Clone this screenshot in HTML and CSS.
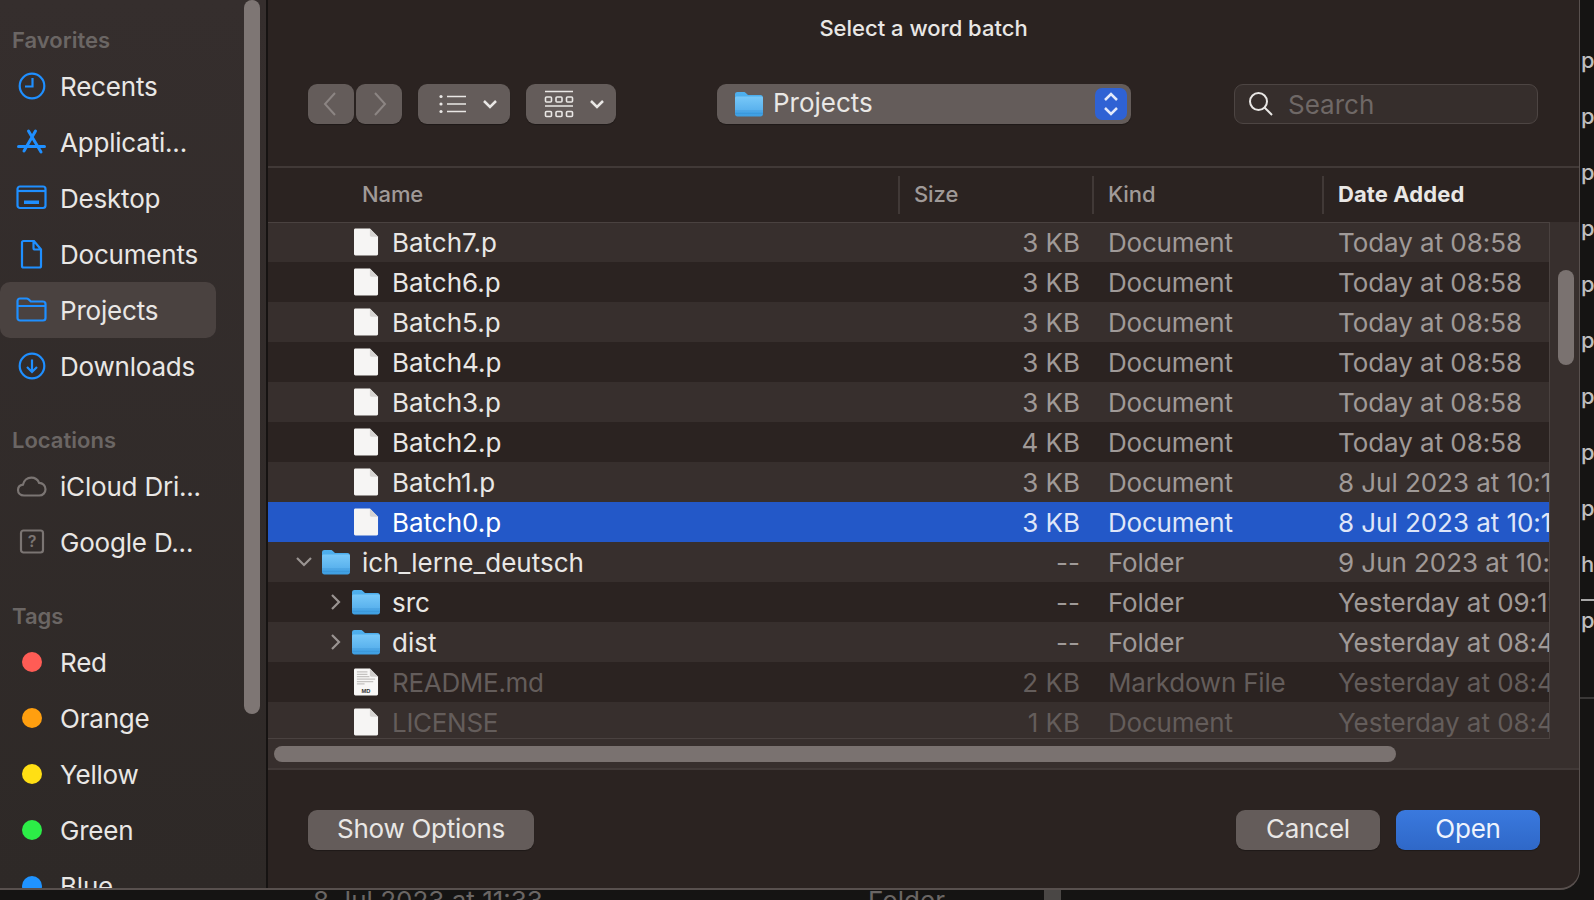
FILE: index.html
```html
<!DOCTYPE html>
<html lang="en">
<head>
    <meta charset="UTF-8">
    <meta name="viewport" content="width=device-width, initial-scale=1.0">
    <title>Select a word batch</title>
    <link rel="stylesheet" href="styles.css">
</head>
<body>

    <!-- shared icons -->
    <svg class="defs" width="0" height="0">
        <defs>
            <linearGradient id="folder-back" x1="0" y1="0" x2="0" y2="1">
                <stop offset="0" stop-color="#4fb0ee"/>
                <stop offset="1" stop-color="#3f9fe2"/>
            </linearGradient>
            <linearGradient id="folder-front" x1="0" y1="0" x2="0" y2="1">
                <stop offset="0" stop-color="#78c8f8"/>
                <stop offset="1" stop-color="#56afec"/>
            </linearGradient>
            <symbol id="folder" viewBox="0 0 28 26">
                <path d="M0 3.500C0 1.800 1 1 2.500 1h6c1.200 0 1.800.4 2.600 1.200L13 4h12.500C27 4 28 5 28 6.500V23c0 1.600-1 2.500-2.500 2.500h-23C1 25.500 0 24.600 0 23z" fill="url(#folder-back)"/>
                <path d="M0 7c0-1 .8-1.600 1.800-1.600h24.400C27.200 5.400 28 6 28 7v14H0z" fill="url(#folder-front)"/>
                <path d="M0 20h28M0 22.500h28" stroke="#3b94d6" stroke-width=".7"/>
            </symbol>
            <symbol id="doc" viewBox="0 0 26 30">
                <path d="M1.500 1h15L25 9.500V27.500c0 .9-.6 1.500-1.500 1.500h-22C.6 29 0 28.400 0 27.500V2.500C0 1.600.6 1 1.500 1z" fill="#f6f5f4"/>
                <path d="M16.500 1v7c0 1 .5 1.500 1.500 1.500h7z" fill="#d6d4d2"/>
            </symbol>
            <symbol id="doc-md" viewBox="0 0 26 30">
                <path d="M1.500 1h15L25 9.500V27.500c0 .9-.6 1.500-1.500 1.500h-22C.6 29 0 28.400 0 27.500V2.500C0 1.600.6 1 1.500 1z" fill="#f8f7f6"/>
                <path d="M16.500 1v7c0 1 .5 1.500 1.500 1.500h7z" fill="#cfcdcb"/>
                <path d="M3 4.500h11M3 7h11M3 9.500h13M3 12h19M3 14.500h17M3 17h8" stroke="#c4c2c0" stroke-width="1.300"/>
                <text x="12.500" y="26" text-anchor="middle" class="md-label">MD</text>
            </symbol>
        </defs>
    </svg>

    <div class="window">
        <!-- Sidebar -->
        <aside class="sidebar">
            <div class="side-list">
                <h4 class="side-head first">Favorites</h4>
                <div class="side-item">
                    <svg class="side-icon" viewBox="0 0 32 32"><circle cx="16" cy="16" r="12.300"/><path d="M16.500 8v8.500H9"/></svg>
                    <span>Recents</span>
                </div>
                <div class="side-item">
                    <svg class="side-icon app" viewBox="0 0 32 32"><path d="M12.500 5L25 26M19.500 5L8 25M2.500 20.500h26"/></svg>
                    <span>Applicati...</span>
                </div>
                <div class="side-item">
                    <svg class="side-icon" viewBox="0 0 32 32"><rect x="1.500" y="4.500" width="28" height="21.500" rx="2.500"/><path d="M2 9h28"/><rect x="8" y="18.500" width="15" height="3.500" class="solid"/></svg>
                    <span>Desktop</span>
                </div>
                <div class="side-item">
                    <svg class="side-icon" viewBox="0 0 32 32"><path d="M7.500 3h10.500l7 8.500v16.500c0 1-.6 1.500-1.500 1.500h-16c-.9 0-1.500-.5-1.500-1.500v-23.500c0-1 .6-1.500 1.500-1.500zM17.500 3.500v6.500c0 1 .5 1.500 1.500 1.500h6"/></svg>
                    <span>Documents</span>
                </div>
                <div class="side-item active">
                    <svg class="side-icon" viewBox="0 0 32 32"><path d="M1.500 7c0-1.500 1-2.500 2.500-2.500h6.500c1 0 1.500.3 2.300 1l2 2h12c1.500 0 2.700 1 2.700 2.500v14c0 1.500-1 2.500-2.500 2.500h-23c-1.500 0-2.500-1-2.500-2.500zM1.500 12h27"/></svg>
                    <span>Projects</span>
                </div>
                <div class="side-item">
                    <svg class="side-icon" viewBox="0 0 32 32"><circle cx="16" cy="16" r="12.300"/><path d="M16 9.500v12M11 17l5 5 5-5"/></svg>
                    <span>Downloads</span>
                </div>

                <h4 class="side-head locations">Locations</h4>
                <div class="side-item">
                    <svg class="side-icon grey" viewBox="0 0 32 32"><path d="M8 25.500c-3.500 0-6-2.400-6-5.500 0-2.800 2-5 5-5.400.8-4 4.200-7 8.300-7 3.500 0 6.500 2 7.800 5.300 3.700 0 6.400 3 6.400 6.300 0 3.400-2.600 6.300-6.200 6.300z"/></svg>
                    <span>iCloud Dri...</span>
                </div>
                <div class="side-item">
                    <svg class="side-icon grey" viewBox="0 0 32 32"><rect x="5" y="4.500" width="22" height="22" rx="2.500"/><text x="16" y="21" text-anchor="middle" class="q-mark">?</text></svg>
                    <span>Google D...</span>
                </div>

                <h4 class="side-head tags">Tags</h4>
                <div class="side-item"><i class="tag red"></i><span>Red</span></div>
                <div class="side-item"><i class="tag orange"></i><span>Orange</span></div>
                <div class="side-item"><i class="tag yellow"></i><span>Yellow</span></div>
                <div class="side-item"><i class="tag green"></i><span>Green</span></div>
                <div class="side-item"><i class="tag blue"></i><span>Blue</span></div>
            </div>
            <div class="side-scroll"></div>
        </aside>

        <!-- Main panel -->
        <main class="panel">
            <div class="top">
                <div class="title">Select a word batch</div>
                <div class="toolbar">
                    <div class="nav-pair">
                        <button class="tb-btn nav"><svg viewBox="0 0 16 26"><path d="M12 2L2 13l10 11"/></svg></button>
                        <button class="tb-btn nav"><svg viewBox="0 0 16 26"><path d="M4 2l10 11L4 24"/></svg></button>
                    </div>
                    <button class="tb-btn view-list">
                        <svg class="list-glyph" viewBox="0 0 28 20"><circle cx="2" cy="2.500" r="1.600"/><circle cx="2" cy="10" r="1.600"/><circle cx="2" cy="17.500" r="1.600"/><path d="M8 2.500h19M8 10h19M8 17.500h19"/></svg>
                        <svg class="chev" viewBox="0 0 16 10"><path d="M2 2l6 6 6-6"/></svg>
                    </button>
                    <button class="tb-btn view-grid">
                        <svg class="grid-glyph" viewBox="0 0 30 28"><path d="M1 1.500h28M1 16h28"/><rect x="1.500" y="7" width="6" height="5" rx="1"/><rect x="12" y="7" width="6" height="5" rx="1"/><rect x="22.500" y="7" width="6" height="5" rx="1"/><rect x="1.500" y="21.500" width="6" height="5" rx="1"/><rect x="12" y="21.500" width="6" height="5" rx="1"/><rect x="22.500" y="21.500" width="6" height="5" rx="1"/></svg>
                        <svg class="chev" viewBox="0 0 16 10"><path d="M2 2l6 6 6-6"/></svg>
                    </button>
                    <div class="path-select">
                        <svg class="path-folder"><use href="#folder"/></svg>
                        <span class="path-name">Projects</span>
                        <span class="stepper">
                            <svg viewBox="0 0 16 26"><path d="M2 9l6-6 6 6M2 17l6 6 6-6"/></svg>
                        </span>
                    </div>
                    <div class="search">
                        <svg viewBox="0 0 26 26"><circle cx="10.500" cy="10.500" r="8.500"/><path d="M16.500 16.500l7.500 7.500"/></svg>
                        <span>Search</span>
                    </div>
                </div>
            </div>

            <div class="row columns">
                <div class="cell name-cell">Name</div>
                <div class="cell col-size">Size</div>
                <div class="cell col-kind">Kind</div>
                <div class="cell col-date sorted">Date Added</div>
            </div>

            <div class="browser">
                <div class="list-wrap">
                    <div class="list">
                        <div class="row alt">
                            <div class="cell file"><svg class="doc"><use href="#doc"/></svg>Batch7.p</div>
                            <div class="cell size">3 KB</div><div class="cell kind">Document</div><div class="cell date">Today at 08:58</div>
                        </div>
                        <div class="row">
                            <div class="cell file"><svg class="doc"><use href="#doc"/></svg>Batch6.p</div>
                            <div class="cell size">3 KB</div><div class="cell kind">Document</div><div class="cell date">Today at 08:58</div>
                        </div>
                        <div class="row alt">
                            <div class="cell file"><svg class="doc"><use href="#doc"/></svg>Batch5.p</div>
                            <div class="cell size">3 KB</div><div class="cell kind">Document</div><div class="cell date">Today at 08:58</div>
                        </div>
                        <div class="row">
                            <div class="cell file"><svg class="doc"><use href="#doc"/></svg>Batch4.p</div>
                            <div class="cell size">3 KB</div><div class="cell kind">Document</div><div class="cell date">Today at 08:58</div>
                        </div>
                        <div class="row alt">
                            <div class="cell file"><svg class="doc"><use href="#doc"/></svg>Batch3.p</div>
                            <div class="cell size">3 KB</div><div class="cell kind">Document</div><div class="cell date">Today at 08:58</div>
                        </div>
                        <div class="row">
                            <div class="cell file"><svg class="doc"><use href="#doc"/></svg>Batch2.p</div>
                            <div class="cell size">4 KB</div><div class="cell kind">Document</div><div class="cell date">Today at 08:58</div>
                        </div>
                        <div class="row alt">
                            <div class="cell file"><svg class="doc"><use href="#doc"/></svg>Batch1.p</div>
                            <div class="cell size">3 KB</div><div class="cell kind">Document</div><div class="cell date">8 Jul 2023 at 10:12</div>
                        </div>
                        <div class="row selected">
                            <div class="cell file"><svg class="doc"><use href="#doc"/></svg>Batch0.p</div>
                            <div class="cell size">3 KB</div><div class="cell kind">Document</div><div class="cell date">8 Jul 2023 at 10:12</div>
                        </div>
                        <div class="row alt">
                            <div class="cell folder-top">
                                <svg class="disclosure" viewBox="0 0 18 12"><path d="M2 2l7 7 7-7"/></svg>
                                <svg class="folder"><use href="#folder"/></svg>ich_lerne_deutsch
                            </div>
                            <div class="cell size">--</div><div class="cell kind">Folder</div><div class="cell date">9 Jun 2023 at 10:36</div>
                        </div>
                        <div class="row">
                            <div class="cell folder-sub">
                                <svg class="disclosure side" viewBox="0 0 12 18"><path d="M2 2l7 7-7 7"/></svg>
                                <svg class="folder"><use href="#folder"/></svg>src
                            </div>
                            <div class="cell size">--</div><div class="cell kind">Folder</div><div class="cell date">Yesterday at 09:19</div>
                        </div>
                        <div class="row alt">
                            <div class="cell folder-sub">
                                <svg class="disclosure side" viewBox="0 0 12 18"><path d="M2 2l7 7-7 7"/></svg>
                                <svg class="folder"><use href="#folder"/></svg>dist
                            </div>
                            <div class="cell size">--</div><div class="cell kind">Folder</div><div class="cell date">Yesterday at 08:45</div>
                        </div>
                        <div class="row dim">
                            <div class="cell file"><svg class="doc"><use href="#doc-md"/></svg><span>README.md</span></div>
                            <div class="cell size">2 KB</div><div class="cell kind">Markdown File</div><div class="cell date">Yesterday at 08:45</div>
                        </div>
                        <div class="row alt dim">
                            <div class="cell file"><svg class="doc"><use href="#doc"/></svg><span>LICENSE</span></div>
                            <div class="cell size">1 KB</div><div class="cell kind">Document</div><div class="cell date">Yesterday at 08:45</div>
                        </div>
                    </div>
                    <div class="h-track"><div class="h-thumb"></div></div>
                </div>
                <div class="v-track"><div class="v-thumb"></div></div>
            </div>

            <div class="actions">
                <button class="btn">Show Options</button>
                <div class="actions-right">
                    <button class="btn wide">Cancel</button>
                    <button class="btn wide primary">Open</button>
                </div>
            </div>
        </main>
    </div>

    <!-- bits of the window behind the dialog -->
    <div class="behind-right">
        <span>p</span><span>p</span><span>p</span><span>p</span><span>p</span><span>p</span><span>p</span><span>p</span><span>p</span><span>h</span><span class="ruled">p</span>
    </div>
    <div class="behind-bottom">
        <span class="behind-date">8 Jul 2023 at 11:33</span>
        <span class="behind-kind">Folder</span>
        <i class="behind-bar"></i>
    </div>

</body>
</html>
```

FILE: styles.css
```css
* {
    box-sizing: border-box;
}

html, body {
    height: 100%;
}

body {
    margin: 0;
    display: grid;
    grid-template-columns: 1580px 14px;
    grid-template-rows: 890px 10px;
    overflow: hidden;
    background-color: #151413;
    font-family: Inter, "Noto Sans", sans-serif;
    font-size: 26px;
    color: #e9e7e5;
}

.defs {
    position: absolute;
}

button {
    font-family: inherit;
    border: none;
    padding: 0;
}

.md-label {
    font-family: "Liberation Sans", sans-serif;
    font-size: 6px;
    font-weight: bold;
    fill: #333;
}

/* Window */
.window {
    display: flex;
    height: 890px;
    overflow: hidden;
    border-right: 1px solid #58504e;
    border-bottom: 2px solid #58504e;
    border-bottom-right-radius: 20px;
    background-color: #2b2321;
}

/* Sidebar */
.sidebar {
    width: 268px;
    flex-shrink: 0;
    display: flex;
    border-right: 2px solid #161312;
    background: linear-gradient(#352e2d, #2e2927);
    overflow: hidden;
}

.side-list {
    width: 244px;
    flex-shrink: 0;
}

.side-head {
    margin: 0;
    padding-left: 12px;
    height: 36px;
    line-height: 36px;
    font-size: 22px;
    font-weight: 600;
    color: #6b6664;
}

.side-head.first {
    margin-top: 22px;
}

.side-head.locations {
    margin-top: 28px;
}

.side-head.tags {
    margin-top: 28px;
}

.side-item {
    display: flex;
    align-items: center;
    width: 216px;
    height: 56px;
    padding-left: 16px;
    border-radius: 10px;
    white-space: nowrap;
    letter-spacing: -0.2px;
}

.side-item.active {
    background-color: #4a4240;
}

.side-item span {
    margin-left: 12px;
}

.side-icon {
    width: 32px;
    height: 32px;
    flex-shrink: 0;
    fill: none;
    stroke: #1f8fff;
    stroke-width: 2.200;
}

.side-icon.app {
    stroke-width: 3;
    stroke-linecap: round;
}

.side-icon .solid {
    fill: #1f8fff;
    stroke: none;
}

.side-icon.grey {
    stroke: #7b7573;
}

.q-mark {
    font-size: 16px;
    font-weight: 600;
    fill: #7b7573;
    stroke: none;
}

.tag {
    width: 20px;
    height: 20px;
    margin: 0 6px;
    border-radius: 50%;
    flex-shrink: 0;
}

.tag.red { background-color: #ff5c55; }
.tag.orange { background-color: #ff9f0f; }
.tag.yellow { background-color: #ffdf14; }
.tag.green { background-color: #2ced47; }
.tag.blue { background-color: #1f93ff; }

.side-scroll {
    width: 16px;
    height: 714px;
    border-radius: 8px;
    background-color: #7e7674;
}

/* Main panel */
.panel {
    flex: 1;
    min-width: 0;
    display: flex;
    flex-direction: column;
}

.top {
    height: 168px;
    flex-shrink: 0;
    border-bottom: 2px solid #413937;
}

.title {
    padding-top: 15px;
    height: 84px;
    text-align: center;
    font-size: 22px;
    line-height: 27px;
    font-weight: 500;
}

.toolbar {
    display: flex;
    padding-left: 40px;
}

.tb-btn {
    display: flex;
    align-items: center;
    height: 40px;
    border-radius: 9px;
    background-color: #645c5a;
    box-shadow: 0 1px 1px rgba(0, 0, 0, 0.3);
}

.nav-pair {
    display: flex;
    gap: 2px;
}

.tb-btn.nav {
    width: 46px;
    justify-content: center;
}

.tb-btn.nav svg {
    width: 16px;
    height: 26px;
    fill: none;
    stroke: #8c8583;
    stroke-width: 2;
}

.view-list {
    width: 92px;
    margin-left: 16px;
    padding-left: 21px;
}

.view-grid {
    width: 90px;
    margin-left: 16px;
    padding-left: 18px;
}

.list-glyph {
    width: 28px;
    height: 20px;
    fill: #e9e7e5;
    stroke: none;
}

.list-glyph path,
.grid-glyph,
.chev {
    fill: none;
    stroke: #e9e7e5;
}

.list-glyph path {
    stroke-width: 1.700;
}

.grid-glyph {
    width: 30px;
    height: 28px;
    stroke-width: 1.600;
}

.chev {
    width: 16px;
    height: 10px;
    margin-left: 15px;
    stroke-width: 2.500;
}

.path-select {
    display: flex;
    align-items: center;
    width: 414px;
    height: 40px;
    margin-left: 101px;
    padding: 0 4px 0 18px;
    border-radius: 9px;
    background-color: #645c5a;
    box-shadow: 0 1px 1px rgba(0, 0, 0, 0.3);
}

.path-folder {
    width: 28px;
    height: 26px;
    flex-shrink: 0;
}

.path-name {
    flex: 1;
    margin-left: 10px;
    padding-bottom: 3px;
}

.stepper {
    display: flex;
    align-items: center;
    justify-content: center;
    width: 32px;
    height: 32px;
    border-radius: 7px;
    background-color: #2f62d4;
}

.stepper svg {
    width: 16px;
    height: 26px;
    fill: none;
    stroke: #e4eafa;
    stroke-width: 2.500;
}

.search {
    display: flex;
    align-items: center;
    width: 304px;
    height: 40px;
    margin-left: 103px;
    padding-left: 13px;
    border: 1px solid #4d4543;
    border-radius: 9px;
    background-color: #362e2c;
    color: #6f6866;
}

.search svg {
    width: 26px;
    height: 26px;
    margin-right: 14px;
    fill: none;
    stroke: #e9e7e5;
    stroke-width: 2;
}

/* Table rows */
.row {
    display: grid;
    grid-template-columns: 632px 194px 230px 226px;
    height: 40px;
    flex-shrink: 0;
    align-items: center;
    white-space: nowrap;
    overflow: hidden;
}

.row.alt {
    background-color: #372f2d;
}

.row.columns {
    grid-template-columns: 630px 194px 230px 228px;
    height: 54px;
    font-size: 22px;
    color: #a09a98;
    font-weight: 500;
    letter-spacing: -0.1px;
}

.row.columns .cell {
    height: 38px;
    line-height: 36px;
}

.name-cell {
    padding-left: 94px;
}

.col-size,
.col-kind,
.col-date {
    padding-left: 14px;
    border-left: 2px solid #413937;
}

.row.columns .col-date.sorted {
    color: #e9e7e5;
    font-weight: 700;
    letter-spacing: 0.1px;
}

.cell {
    min-width: 0;
    overflow: hidden;
}

.file,
.folder-top,
.folder-sub {
    display: flex;
    align-items: center;
}

.file {
    padding-left: 86px;
}

.doc {
    width: 25px;
    height: 30px;
    margin-right: 13px;
    flex-shrink: 0;
}

.folder-top {
    padding-left: 27px;
}

.folder-sub {
    padding-left: 62px;
}

.folder {
    width: 28px;
    height: 26px;
    margin-right: 12px;
    flex-shrink: 0;
}

.disclosure {
    width: 18px;
    height: 12px;
    margin-right: 9px;
    flex-shrink: 0;
    fill: none;
    stroke: #9a9492;
    stroke-width: 2.200;
}

.disclosure.side {
    width: 12px;
    height: 18px;
    margin-right: 10px;
}

.size {
    text-align: right;
    padding-right: 14px;
    color: #a09a98;
}

.kind,
.date {
    padding-left: 14px;
    color: #a09a98;
}

.kind {
    letter-spacing: -0.2px;
}

.date {
    letter-spacing: -0.05px;
}

.selected {
    background-color: #2358c8;
    color: #fff;
}

.selected .size,
.selected .kind,
.selected .date {
    color: #dfe6f8;
}

.dim .file span,
.dim .size,
.dim .kind,
.dim .date {
    color: #645d5b;
}

.dim .file span {
    letter-spacing: -0.3px;
}

/* Scroll areas */
.browser {
    display: flex;
    flex-shrink: 0;
    height: 548px;
    border-bottom: 2px solid #413937;
    background-color: #372f2d;
}

.list-wrap {
    width: 1282px;
    flex-shrink: 0;
}

.list {
    height: 517px;
    overflow: hidden;
    background-color: #2b2321;
    border-top: 1px solid #4a4240;
    border-right: 1px solid #4a4240;
    border-bottom: 1px solid #4a4240;
}

.list .row:first-child {
    margin-top: -1px;
}

.h-track {
    padding: 7px 0 0 6px;
}

.h-thumb {
    width: 1122px;
    height: 16px;
    border-radius: 8px;
    background-color: #7a7270;
}

.v-track {
    flex: 1;
    padding: 48px 0 0 8px;
}

.v-thumb {
    width: 16px;
    height: 95px;
    border-radius: 8px;
    background-color: #7a7270;
}

/* Bottom buttons */
.actions {
    flex: 1;
    display: flex;
    justify-content: space-between;
    padding: 40px 39px 0 40px;
}

.actions-right {
    display: flex;
    gap: 16px;
}

.btn {
    width: 226px;
    height: 40px;
    padding-bottom: 4px;
    border-radius: 9px;
    background-color: #645c5a;
    color: #e9e7e5;
    font-size: 26px;
    letter-spacing: -0.25px;
    box-shadow: 0 1px 1px rgba(0, 0, 0, 0.3);
}

.btn.wide {
    width: 144px;
}

.btn.primary {
    background: linear-gradient(#3a79de, #2f68c8);
    color: #eef3fd;
}

/* Window behind */
.behind-right {
    grid-column: 2;
    grid-row: 1;
    height: 699px;
    padding-top: 32px;
    display: flex;
    flex-direction: column;
    border-bottom: 2px solid #3a3837;
    overflow: hidden;
    color: #bdbdbd;
    font-size: 22px;
    font-weight: 500;
}

.behind-right span {
    display: block;
    height: 56px;
    line-height: 56px;
    flex-shrink: 0;
    padding-left: 1px;
}

.behind-right .ruled {
    position: relative;
}

.behind-right .ruled::before {
    content: "";
    position: absolute;
    top: 7px;
    left: 1px;
    width: 13px;
    height: 2px;
    background-color: #a8a8a8;
}

.behind-bottom {
    grid-column: 1 / 3;
    grid-row: 2;
    display: flex;
    height: 10px;
    overflow: hidden;
    color: #6a6664;
    font-size: 26px;
    line-height: 22px;
}

.behind-date {
    margin-left: 313px;
}

.behind-kind {
    margin-left: 325px;
}

.behind-bar {
    width: 17px;
    height: 10px;
    margin-left: 99px;
    background-color: #4a4745;
}
```
